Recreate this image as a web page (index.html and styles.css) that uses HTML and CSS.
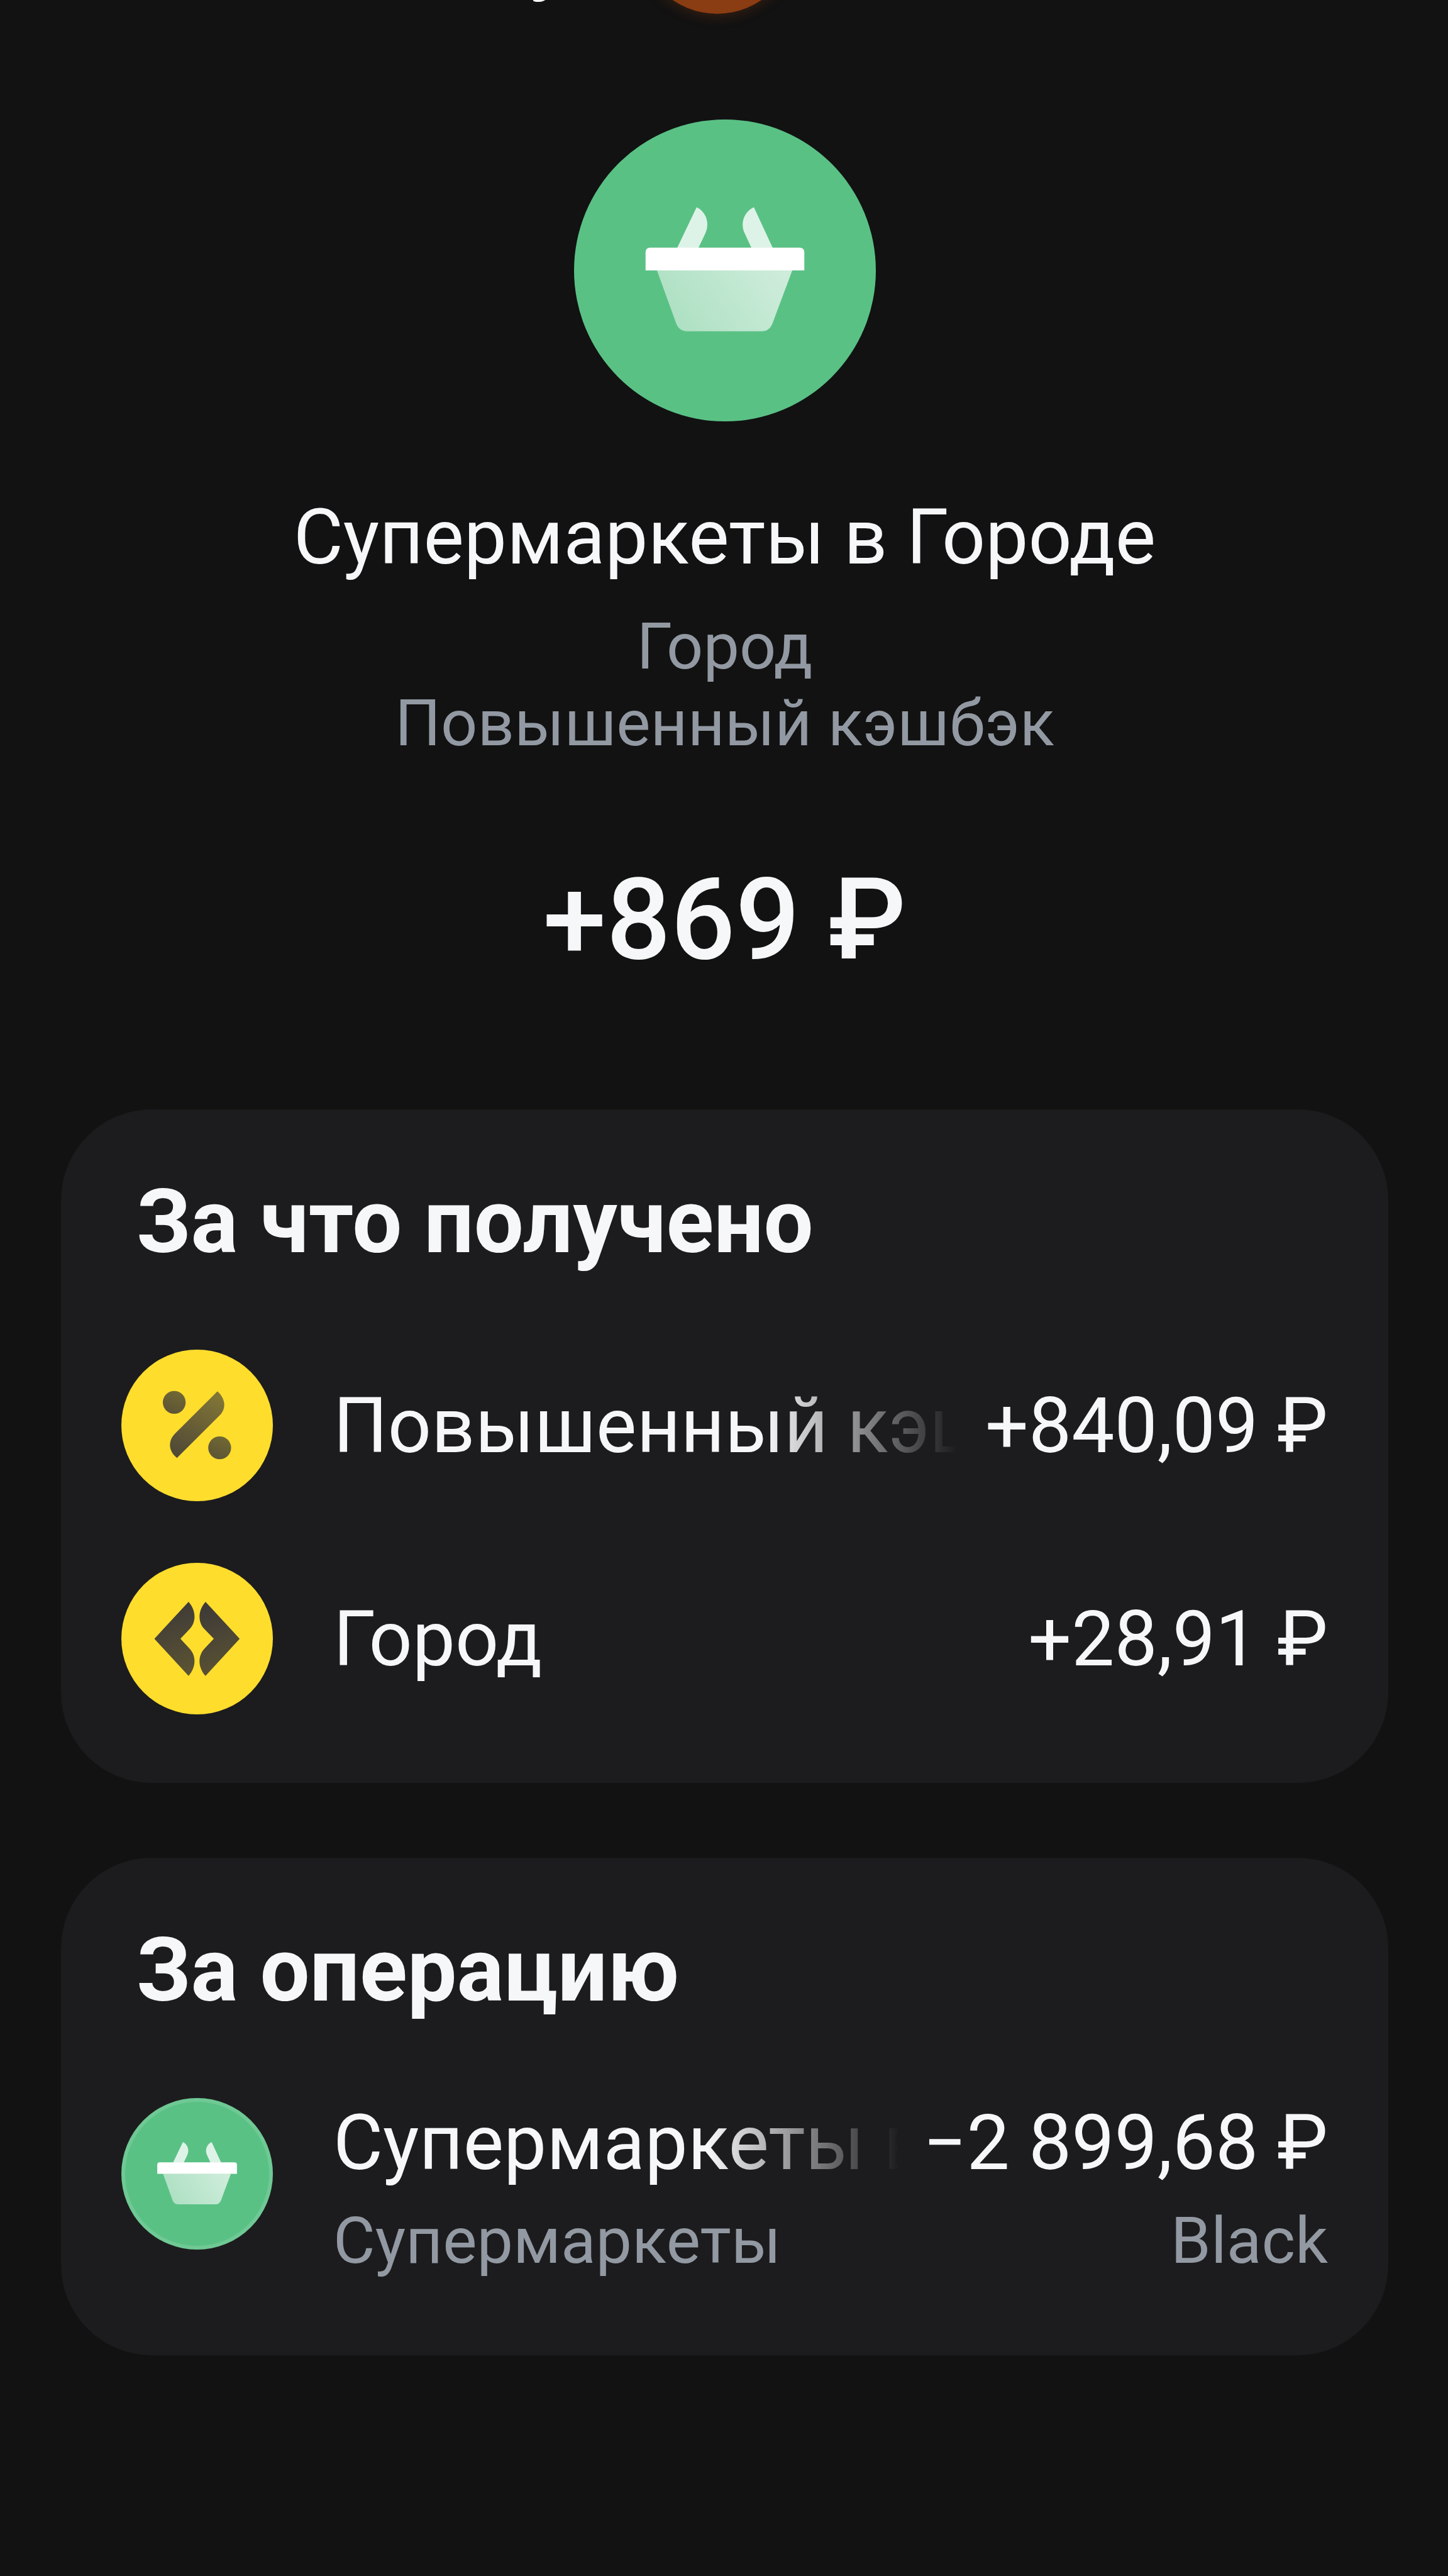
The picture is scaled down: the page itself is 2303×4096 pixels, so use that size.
FILE: index.html
```html
<!DOCTYPE html>
<html lang="ru">
<head>
  <meta charset="UTF-8">
  <title>Супермаркеты в Городе</title>
  <link rel="stylesheet" href="styles.css">
</head>
<body>
  <div class="topbar">
    <span class="topbar-text">у</span>
    <span class="topbar-dot"></span>
  </div>

  <main class="page">
    <svg class="hero-icon" viewBox="55 47 1460 1460">
      <defs>
        <linearGradient id="basket" x1="0" y1="0.6" x2="1" y2="0.3">
          <stop offset="0" stop-color="#fff" stop-opacity="0.5"/>
          <stop offset="1" stop-color="#fff" stop-opacity="0.7"/>
        </linearGradient>
      </defs>
      <circle cx="785" cy="777" r="730" fill="#5ac185"/>
      <g id="basket-shape">
        <path d="M648 471 L553 670 H656 L690 598 C714 548 693 492 648 471Z" fill="#fff" fill-opacity="0.8"/>
        <path d="M925 471 L1017 670 H914 L881 598 C857 548 878 492 925 471Z" fill="#fff" fill-opacity="0.8"/>
        <path d="M456 776 H1111 L1015 1033 Q1000 1071 963 1071 H602 Q564 1071 549 1033Z" fill="url(#basket)"/>
        <path d="M401 777 V690 Q401 667 424 667 H1145 Q1169 667 1169 690 V777Z" fill="#fff"/>
      </g>
    </svg>
    <h1 class="title">Супермаркеты в Городе</h1>
    <p class="subtitle">Город<br>Повышенный кэшбэк</p>
    <div class="total">+869&nbsp;₽</div>

    <section class="card">
      <h2>За что получено</h2>
      <div class="row">
        <svg class="icon" viewBox="40 58 954 954">
          <defs>
            <linearGradient id="bar" x1="0.7" y1="0" x2="0.3" y2="1">
              <stop offset="0" stop-color="#817536"/>
              <stop offset="1" stop-color="#504a36"/>
            </linearGradient>
            <linearGradient id="dot" x1="0.7" y1="0" x2="0.3" y2="1">
              <stop offset="0" stop-color="#716834"/>
              <stop offset="1" stop-color="#5c5435"/>
            </linearGradient>
          </defs>
          <circle cx="517" cy="535" r="477" fill="#ffdd2d"/>
          <circle cx="373" cy="390" r="72" fill="url(#dot)"/>
          <circle cx="659" cy="676" r="72" fill="url(#dot)"/>
          <path d="M645 320 L376 588 C334 632 334 696 390 740 L660 471 C702 428 696 366 645 320Z" fill="url(#bar)"/>
        </svg>
        <div class="info">
          <div class="line">
            <span class="name fade">Повышенный кэшбэк</span>
            <span class="sum">+840,09&nbsp;₽</span>
          </div>
        </div>
      </div>
      <div class="row">
        <svg class="icon" viewBox="40 50 954 954">
          <defs>
            <linearGradient id="city" x1="0.4" y1="0" x2="0.6" y2="1">
              <stop offset="0" stop-color="#3d3a37"/>
              <stop offset="1" stop-color="#5b5333"/>
            </linearGradient>
          </defs>
          <circle cx="517" cy="527" r="477" fill="#ffdd2d"/>
          <path d="M463 295 L248 528 L463 762 C512 705 512 636 470 590 L412 528 L470 467 C512 422 512 350 463 295Z" fill="url(#city)"/>
          <path d="M570 295 L785 528 L570 762 C521 705 521 636 563 590 L622 528 L563 467 C521 422 521 350 570 295Z" fill="url(#city)"/>
        </svg>
        <div class="info">
          <div class="line">
            <span class="name">Город</span>
            <span class="sum">+28,91&nbsp;₽</span>
          </div>
        </div>
      </div>
    </section>

    <section class="card card-operation">
      <h2>За операцию</h2>
      <div class="row">
        <svg class="icon" viewBox="55 47 1460 1460">
          <circle cx="785" cy="777" r="730" fill="#5ac185"/>
          <circle cx="785" cy="777" r="712" fill="none" stroke="#fff" stroke-opacity="0.13" stroke-width="36"/>
          <use href="#basket-shape"/>
        </svg>
        <div class="info">
          <div class="line">
            <span class="name fade">Супермаркеты в Городе</span>
            <span class="sum">−2&nbsp;899,68&nbsp;₽</span>
          </div>
          <div class="line note">
            <span class="name">Супермаркеты</span>
            <span>Black</span>
          </div>
        </div>
      </div>
    </section>
  </main>
</body>
</html>
```

FILE: styles.css
```css
* { box-sizing: border-box; margin: 0; padding: 0; }
body { height: 4096px; overflow: hidden; background: #121212; color: #f6f7f8; font-family: Roboto, "Noto Sans", sans-serif; }

/* bottom edge of the header that is scrolled away */
.topbar { position: absolute; top: 0; left: 0; width: 100%; height: 60px; overflow: hidden; }
.topbar-text { position: absolute; left: 841px; top: -136px; font-size: 122px; line-height: 144px; font-weight: 700; }
.topbar-dot { position: absolute; left: 1016px; top: -227px; width: 249px; height: 249px; border-radius: 50%; background: #8a3c12; box-shadow: 0 4px 20px rgba(138, 60, 18, 0.3); }

.page { display: flex; flex-direction: column; align-items: center; padding: 190px 95px 0 97px; }
.hero-icon { width: 480px; height: 480px; }
.title { margin-top: 113px; font-size: 121.5px; line-height: 144px; font-weight: 400; }
.subtitle { margin-top: 41px; font-size: 102.4px; line-height: 121.5px; text-align: center; color: #9299a2; }
.total { margin-top: 143px; font-size: 180.7px; line-height: 216px; font-weight: 500; }

.card { width: 2111px; margin-top: 194px; padding: 95px 96px 109px; border-radius: 144px; background: #1c1c1e; }
.card h2 { margin-left: 24px; font-size: 140.2px; line-height: 168px; font-weight: 700; }
.card-operation { margin-top: 119px; padding-bottom: 121px; }

.row { display: flex; align-items: center; gap: 96px; margin-top: 98px; }
.card h2 + .row { margin-top: 119px; }
.card-operation .row { align-items: flex-start; }
.icon { flex: none; width: 241px; height: 241px; }
.info { flex: 1; min-width: 0; }
.line { display: flex; gap: 45px; padding-top: 2px; font-size: 121.5px; line-height: 144px; white-space: nowrap; }
.name { flex: 1; min-width: 0; overflow: hidden; }
.fade { -webkit-mask-image: linear-gradient(to left, transparent, #000 305px); mask-image: linear-gradient(to left, transparent, #000 305px); }
.card-operation .name.fade { margin-right: -8px; }
.card-operation .line { padding-top: 0; }
.note { margin-top: 23px; font-size: 102.4px; line-height: 121px; color: #9299a2; }
```
